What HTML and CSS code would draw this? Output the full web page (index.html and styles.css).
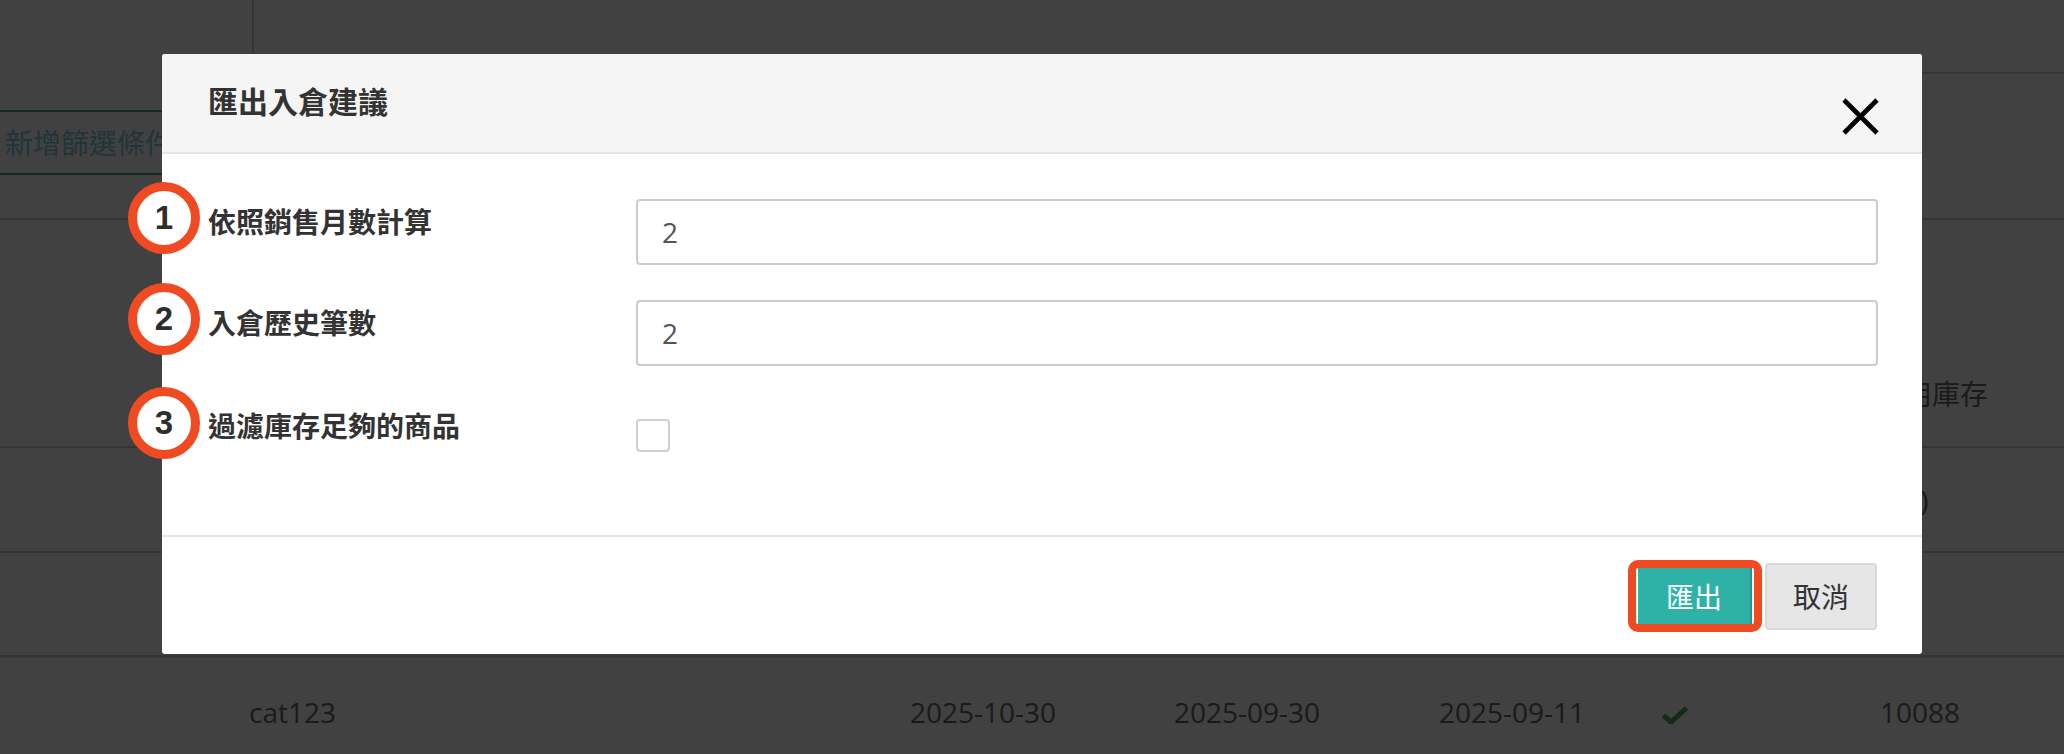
FILE: index.html
```html
<!DOCTYPE html>
<html lang="zh-Hant">
<head>
<meta charset="utf-8">
<title>匯出入倉建議</title>
<link rel="stylesheet" href="styles.css">
</head>
<body>
<div class="page">
  <div class="topbar"><div class="top-left"></div><div class="top-right"></div></div>
  <div class="filterbar"><button class="filter-btn" type="button">新增篩選條件</button></div>
  <div class="trow thead"><span class="c7">可用庫存</span></div>
  <div class="trow r1"><span class="c7">(10)</span></div>
  <div class="trow r2"></div>
  <div class="trow r3">
    <span class="c2">cat123</span>
    <span class="c3">2025-10-30</span>
    <span class="c4">2025-09-30</span>
    <span class="c5">2025-09-11</span>
    <span class="c6"><svg class="check" viewBox="0 0 26 18" width="26" height="18"><path d="M1.5 9.5 L9 16 L24.5 2" fill="none" stroke="#142a16" stroke-width="5" stroke-linejoin="miter"/></svg></span>
    <span class="c7">10088</span>
  </div>
</div>

<div class="modal">
  <div class="modal-header">
    <h4 class="modal-title">匯出入倉建議</h4>
    <button class="close" type="button" aria-label="close">
      <svg viewBox="0 0 37 37" width="37" height="37"><path d="M2 2 L35 35 M35 2 L2 35" stroke="#000" stroke-width="4.6" fill="none"/></svg>
    </button>
  </div>
  <div class="modal-body">
    <div class="form-row">
      <label class="label"><span class="badge">1</span>依照銷售月數計算</label>
      <input class="input" type="text" value="2">
    </div>
    <div class="form-row">
      <label class="label"><span class="badge">2</span>入倉歷史筆數</label>
      <input class="input" type="text" value="2">
    </div>
    <div class="form-row">
      <label class="label label-check"><span class="badge">3</span>過濾庫存足夠的商品</label>
      <div><input class="checkbox" type="checkbox"></div>
    </div>
  </div>
  <div class="modal-footer">
    <span class="annot"><button class="btn btn-primary" type="button">匯出</button></span>
    <button class="btn btn-default" type="button">取消</button>
  </div>
</div>
</body>
</html>
```

FILE: styles.css
```css
* { box-sizing: border-box; }
html, body { margin: 0; padding: 0; }
body {
  width: 2064px;
  height: 754px;
  overflow: hidden;
  position: relative;
  background: #414141;
  font-family: "Open Sans", "Noto Sans CJK TC", sans-serif;
  color: #1a1a1a;
}

/* background page (dimmed by backdrop) */
.page { width: 2064px; }
.topbar { display: flex; height: 74px; }
.top-left { width: 254px; border-right: 2px solid #353535; }
.top-right { flex: 1; border-bottom: 2px solid #353535; }
.filterbar { height: 146px; border-bottom: 2px solid #353535; padding-top: 36px; }
.filter-btn {
  margin-left: -15px;
  height: 65px;
  padding: 0 18px;
  background: transparent;
  border: 2px solid #15272b;
  border-radius: 4px;
  color: #21343a;
  font-family: "Noto Sans CJK TC", sans-serif;
  font-size: 28px;
  line-height: 61px;
}
.trow {
  display: grid;
  grid-template-columns: 249px 661px 264px 265px 223px 218px 1fr;
  font-size: 28px;
  line-height: 40px;
  border-bottom: 2px solid #353535;
}
.c2 { grid-column: 2; }
.c3 { grid-column: 3; }
.c4 { grid-column: 4; }
.c5 { grid-column: 5; }
.c6 { grid-column: 6; display: flex; align-items: center; height: 40px; }
.c7 { grid-column: 7; }
.thead { height: 228px; align-items: end; padding-bottom: 33px; }
.thead .c7 { margin-left: -4px; font-family: "Noto Sans CJK TC", sans-serif; }
.r1 { height: 105px; align-items: center; }
.r2 { height: 105px; border-bottom-width: 3px; }
.r3 { height: 96px; padding-top: 34px; align-items: start; border-bottom: none; }
.check { display: block; margin-top: 6px; }

/* modal */
.modal {
  position: absolute;
  left: 162px;
  top: 54px;
  width: 1760px;
  background: #fff;
  border-radius: 3px;
  font-family: "Noto Sans CJK TC", sans-serif;
  color: #333;
}
.modal-header {
  height: 100px;
  background: #f5f5f5;
  border-bottom: 2px solid #e5e5e5;
  border-radius: 3px 3px 0 0;
  display: flex;
  justify-content: space-between;
  align-items: flex-start;
  padding: 26px 43px 0 46px;
}
.modal-title {
  margin: 0;
  font-size: 30px;
  line-height: 40px;
  font-weight: 600;
  color: #333;
}
.close {
  margin: 18px 0 0;
  padding: 0;
  width: 37px;
  height: 37px;
  border: none;
  background: none;
}
.close svg { display: block; }

.modal-body {
  padding: 45px 44px 83px 46px;
  display: flex;
  flex-direction: column;
  gap: 35px;
}
.form-row {
  display: grid;
  grid-template-columns: 428px 1fr;
  align-items: start;
}
.label {
  position: relative;
  font-size: 28px;
  line-height: 40px;
  font-weight: 700;
  padding-top: 2px;
  color: #333;
}
.label-check { padding-top: 4px; }
.badge {
  position: absolute;
  left: -80px;
  top: -17px;
  width: 72px;
  height: 72px;
  border: 9px solid #f04a23;
  border-radius: 50%;
  background: #fff;
  display: flex;
  align-items: center;
  justify-content: center;
  font-family: "Liberation Sans", sans-serif;
  font-weight: 700;
  font-size: 33px;
  color: #2e2e2e;
}
.label-check .badge { top: -14px; }
.input {
  display: block;
  width: 100%;
  height: 66px;
  margin: 0;
  border: 2px solid #ccc;
  border-radius: 4px;
  padding: 0 24px;
  font-family: "Open Sans", sans-serif;
  font-size: 28px;
  color: #555;
  background: #fff;
  outline: none;
}
.checkbox {
  appearance: none;
  -webkit-appearance: none;
  display: block;
  margin: 18px 0 0;
  width: 34px;
  height: 33px;
  border: 2px solid #cfcfcf;
  border-radius: 4px;
  background: #fff;
}

.modal-footer {
  border-top: 2px solid #e5e5e5;
  padding: 23px 45px 22px;
  display: flex;
  justify-content: flex-end;
  align-items: center;
  gap: 3px;
}
.annot {
  display: flex;
  border: 8px solid #f04a23;
  border-radius: 10px;
  padding: 0 2px;
  background: #fff;
}
.btn {
  font-family: "Noto Sans CJK TC", sans-serif;
  font-size: 28px;
  line-height: 40px;
  padding: 0;
  margin: 0;
}
.btn-primary {
  width: 114px;
  height: 56px;
  background: #2eb2a7;
  border: none;
  border-right: 2px solid #24968c;
  color: #fff;
}
.btn-default {
  width: 112px;
  height: 67px;
  background: #e6e6e6;
  border: 2px solid #d9d9d9;
  border-radius: 4px;
  color: #333;
}
```
